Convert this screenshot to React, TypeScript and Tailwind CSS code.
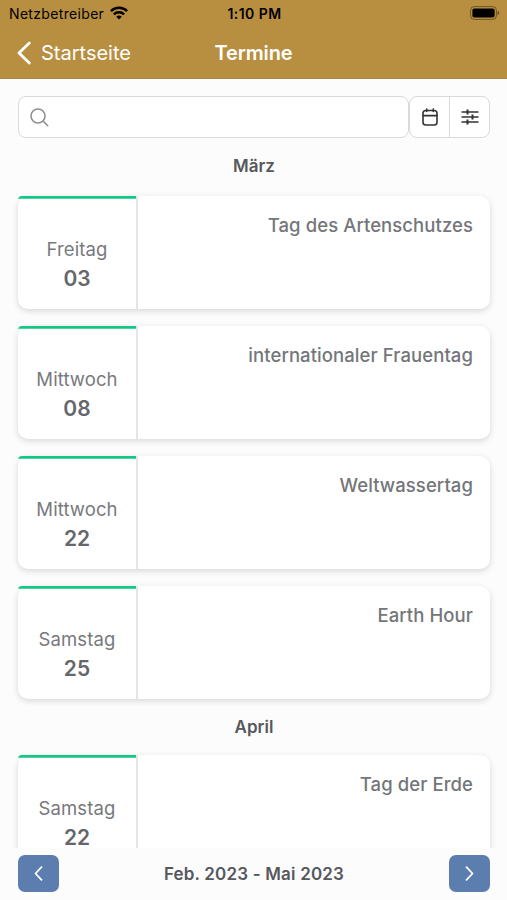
type Appointment = {
  weekday: string;
  day: string;
  title: string;
};

const months: { name: string; appointments: Appointment[] }[] = [
  {
    name: "März",
    appointments: [
      { weekday: "Freitag", day: "03", title: "Tag des Artenschutzes" },
      { weekday: "Mittwoch", day: "08", title: "internationaler Frauentag" },
      { weekday: "Mittwoch", day: "22", title: "Weltwassertag" },
      { weekday: "Samstag", day: "25", title: "Earth Hour" },
    ],
  },
  {
    name: "April",
    appointments: [{ weekday: "Samstag", day: "22", title: "Tag der Erde" }],
  },
];

function StatusBar() {
  return (
    <div className="grid h-[27px] grid-cols-3 items-center pl-[9px] pr-[7px] text-black">
      <div className="flex items-center gap-[6px]">
        <span className="text-[14px] tracking-[0.33px]">Netzbetreiber</span>
        <svg className="mb-[2px]" width="18" height="14" viewBox="0 0 18 14" fill="none" stroke="currentColor" strokeWidth="2.5">
          <path d="M0.9 5.1a11.5 11.5 0 0 1 16.2 0" />
          <path d="M3.9 8.3a7.2 7.2 0 0 1 10.2 0" />
          <path d="M9 13.6 6.2 10.8a4 4 0 0 1 5.6 0Z" fill="currentColor" stroke="none" />
        </svg>
      </div>
      <span className="text-center text-[14px] font-semibold tracking-[0.45px]">1:10 PM</span>
      <svg className="mb-px justify-self-end" width="30" height="14" viewBox="0 0 30 14">
        <rect x="0.6" y="0.6" width="25.8" height="12.8" rx="3.6" fill="none" stroke="#000" strokeOpacity="0.4" />
        <rect x="2.4" y="2.4" width="22.2" height="9.2" rx="1.8" />
        <path d="M27.6 4.8c2.2.8 2.2 3.6 0 4.4Z" fillOpacity="0.45" />
      </svg>
    </div>
  );
}

function Header() {
  return (
    <header className="h-[79px] shrink-0 border-b border-[#ad8643] bg-[#b88f40]">
      <StatusBar />
      <div className="grid h-[51px] grid-cols-3 items-center px-[17px] text-[20px] text-white">
        <div className="flex items-center gap-[10px]">
          <svg width="14" height="24" viewBox="0 0 14 24" fill="none" stroke="currentColor" strokeWidth="2.8" strokeLinecap="round" strokeLinejoin="round">
            <path d="M12.3 2 2 12l10.3 10" />
          </svg>
          <span>Startseite</span>
        </div>
        <h1 className="text-center font-semibold tracking-[-0.1px]">Termine</h1>
      </div>
    </header>
  );
}

function SearchRow() {
  return (
    <div className="flex h-[42px]">
      <div className="flex flex-1 items-center rounded-lg border-[1.5px] border-[#dadada] bg-white pl-[11px]">
        <svg width="19" height="19" viewBox="0 0 19 19" fill="none" stroke="#8c8e91" strokeWidth="1.6" strokeLinecap="round">
          <circle cx="8" cy="8" r="7" />
          <path d="m13 13 4.7 4.7" />
        </svg>
      </div>
      <div className="flex w-[81px] divide-x divide-[#dadada] rounded-lg border-[1.5px] border-[#dadada] bg-white text-[#333]">
        <button className="flex flex-1 items-center justify-center">
          <svg width="16" height="18" viewBox="0 0 16 18" fill="none" stroke="currentColor" strokeWidth="1.6" strokeLinecap="round">
            <rect x="1" y="2.5" width="14" height="14.5" rx="2.8" />
            <path d="M1 7.6h14M4.7 1v2.4M11.3 1v2.4" />
          </svg>
        </button>
        <button className="flex flex-1 items-center justify-center">
          <svg width="18" height="16" viewBox="0 0 18 16" fill="none" stroke="currentColor" strokeWidth="1.6">
            <path d="M0.5 3h17M0.5 8h17M0.5 13h17" />
            <path d="M6.5 0.5v5M11.5 5.5v5M6.5 10.5v5" strokeWidth="2" />
          </svg>
        </button>
      </div>
    </div>
  );
}

function AppointmentCard({ weekday, day, title }: Appointment) {
  return (
    <article className="flex h-[113px] shrink-0 rounded-[10px] bg-white shadow-[0_2px_6px_rgba(0,0,0,0.15)]">
      <div className="flex w-[120px] flex-col items-center overflow-hidden rounded-l-[10px] rounded-tl-[4px] border-r-2 border-[#e5e5e5]">
        <div className="h-[3px] w-full shrink-0 bg-linear-to-b from-[#12c886] from-60% to-[#6bdcb2]" />
        <span className="mt-9 text-[18.5px] leading-7 tracking-[0.1px] text-[#77797d]">{weekday}</span>
        <span className="mt-[2px] text-[21px] leading-7 font-semibold text-[#65676b]">{day}</span>
      </div>
      <h3 className="flex-1 pt-[15px] pr-[17px] text-right text-[18.5px] leading-7 font-medium tracking-[0.08px] text-[#74767a]">
        {title}
      </h3>
    </article>
  );
}

function Footer() {
  return (
    <footer className="z-10 flex h-[52px] shrink-0 items-start justify-between bg-[#fcfcfc] pt-[7px] pr-[17px] pl-[18px]">
      <button className="flex h-[37px] w-[41px] items-center justify-center rounded-[7px] bg-[#5c7eae] text-white">
        <svg width="9" height="15" viewBox="0 0 9 15" fill="none" stroke="currentColor" strokeWidth="1.8" strokeLinecap="round" strokeLinejoin="round">
          <path d="M7.5 1.2 1.5 7.5l6 6.3" />
        </svg>
      </button>
      <span className="pt-px text-[17px] leading-[37px] font-semibold tracking-[0.18px] text-[#56585c]">Feb. 2023 - Mai 2023</span>
      <button className="flex h-[37px] w-[41px] items-center justify-center rounded-[7px] bg-[#5c7eae] text-white">
        <svg width="9" height="15" viewBox="0 0 9 15" fill="none" stroke="currentColor" strokeWidth="1.8" strokeLinecap="round" strokeLinejoin="round">
          <path d="m1.5 1.2 6 6.3-6 6.3" />
        </svg>
      </button>
    </footer>
  );
}

export default function App() {
  return (
    <div className="flex h-screen flex-col overflow-hidden bg-[#fcfcfc] font-['Inter',sans-serif]">
      <Header />
      <main className="min-h-0 flex-1 overflow-hidden pt-[17px] pr-[17px] pl-[18px]">
        <SearchRow />
        {months.map((month) => (
          <section key={month.name} className="group">
            <h2 className="h-14 pt-[14px] text-center text-[17px] leading-7 font-semibold text-[#56585c] group-first-of-type:mb-[2px]">
              {month.name}
            </h2>
            <div className="flex flex-col gap-[17px]">
              {month.appointments.map((appointment) => (
                <AppointmentCard key={appointment.title} {...appointment} />
              ))}
            </div>
          </section>
        ))}
      </main>
      <Footer />
    </div>
  );
}
